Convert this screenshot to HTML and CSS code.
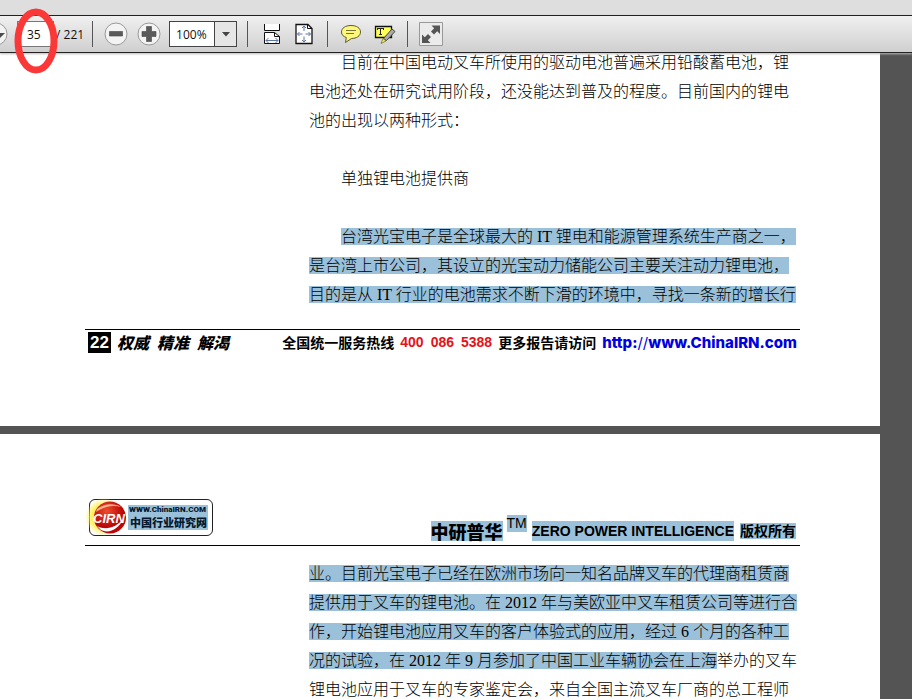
FILE: index.html
```html
<!DOCTYPE html>
<html lang="zh-CN">
<head>
<meta charset="utf-8">
<title>中国锂电池叉车行业报告</title>
<link rel="stylesheet" href="styles.css">
</head>
<body>
<header class="chrome">
  <div class="strip"></div>
  <div class="toolbar">
    <button class="next" aria-label="下一页"><svg width="24" height="24" viewBox="0 0 24 24"><circle cx="12" cy="12" r="11" fill="#f3f3f3" stroke="#999"/><path d="M8 11h13l-6 6z" fill="#4a4a4a"/></svg></button>
    <input class="page-number" aria-label="页码" value="35">
    <span class="total">/ 221</span>
    <span class="divider"></span>
    <button aria-label="缩小"><svg width="24" height="24" viewBox="0 0 24 24"><circle cx="12" cy="12" r="11" fill="#f3f3f3" stroke="#999"/><path d="M5.500 9.500h13v4.500h-13z" fill="#5a5a5a" stroke="#444" stroke-width=".6"/></svg></button>
    <button class="plus" aria-label="放大"><svg width="24" height="24" viewBox="0 0 24 24"><circle cx="12" cy="12" r="11" fill="#f3f3f3" stroke="#999"/><path d="M9.500 4.500h5v5H19v5h-4.500v5h-5v-5H5v-5h4.500z" fill="#5a5a5a" stroke="#444" stroke-width=".6"/></svg></button>
    <span class="zoom">
      <select aria-label="缩放比例"><option>100%</option></select>
      <svg width="8" height="5" viewBox="0 0 8 5"><path d="M0 0h8L4 4.500z" fill="#444"/></svg>
    </span>
    <span class="divider"></span>
    <div class="tools fit">
      <button aria-label="适合宽度"><svg width="18" height="22" viewBox="0 0 18 22"><path d="M1.500 1v6.500h15V1" fill="#fff" stroke="#111"/><path d="M1.500 20.500v-11h10l5 4v7z" fill="#fff" stroke="#111"/><path d="M11.500 9.500v4h5" fill="none" stroke="#111"/><path d="M3 17.500h12M5.500 15L3 17.500 5.500 20M12.500 15l2.500 2.500-2.500 2.500" fill="none" stroke="#5d73a8"/></svg></button>
      <button aria-label="整页显示"><svg width="18" height="22" viewBox="0 0 18 22"><path d="M1 1.500h12l4 4V20.500H1z" fill="#fff" stroke="#111" stroke-width="1.300"/><path d="M12.500 1.500v4H17" fill="none" stroke="#111"/><path d="M2.500 11h5M10.500 11h5M9 3v5M9 13.500v5M4.500 9l-2 2 2 2M13.500 9l2 2-2 2M7 5l2-2 2 2M7 17l2 2 2-2" fill="none" stroke="#5d73a8"/></svg></button>
    </div>
    <span class="divider"></span>
    <div class="tools notes">
      <button aria-label="添加附注"><svg width="22" height="20" viewBox="0 0 22 20"><path d="M11 1.500c5.500 0 9.500 2.500 9.500 6.500s-4 6.500-9 6.500L5.500 18.500l.8-5C3.500 12.500 1.500 11 1.500 8c0-4 4-6.500 9.500-6.500z" fill="#fdf87c" stroke="#5d5b32"/><path d="M6 6.500h10M6 9.500h8" stroke="#77733c"/></svg></button>
      <button aria-label="高亮文本"><svg width="22" height="22" viewBox="0 0 22 22"><path d="M1.500 3.500h16v11h-16z" fill="#ffff55" stroke="#111" stroke-width="1.300"/><path d="M3.500 5.500h6M6.500 5.500v6M5 11.500h3M3.500 5v2M9.500 5v2" stroke="#222"/><path d="M18 6l3 2.500-8.500 9-3-2z" fill="#aaa" stroke="#444"/><path d="M9 15.500l3 2.500-5 2.500z" fill="#f2ee4d" stroke="#65632c" stroke-width=".7"/></svg></button>
    </div>
    <span class="divider"></span>
    <button aria-label="阅读模式"><svg width="24" height="24" viewBox="0 0 24 24"><path d="M.5.5h23v23H.5z" fill="#ebebeb" stroke="#999"/><path d="M12.500 3.500H21V12l-2.800-2.800-3.200 3.200-3-3L15.200 6.200zM3 12.500l2.800 2.800L9 12l3 3-3.200 3.200 2.700 2.800H3z" fill="#555"/></svg></button>
  </div>
  <svg class="marker" width="44" height="66" viewBox="0 0 44 66"><ellipse cx="22" cy="33" rx="18" ry="29" fill="none" stroke="#fb3838" stroke-width="7"/></svg>
</header>
<main class="viewer">
  <section class="page first">
    <div class="copy">
      <p>目前在中国电动叉车所使用的驱动电池普遍采用铅酸蓄电池，锂<br>电池还处在研究试用阶段，还没能达到普及的程度。目前国内的锂电<br>池的出现以两种形式：</p>
      <p>单独锂电池提供商</p>
      <p><mark>台湾光宝电子是全球最大的 IT 锂电和能源管理系统生产商之一，</mark><br><mark>是台湾上市公司，其设立的光宝动力储能公司主要关注动力锂电池，</mark><br><mark>目的是从 IT 行业的电池需求不断下滑的环境中，寻找一条新的增长行</mark></p>
    </div>
    <footer class="page-foot">
      <span class="folio">22</span>
      <span class="motto"><span>权威</span><span>精准</span><span>解渴</span></span>
      <span class="hotline"><span>全国统一服务热线</span><span class="phone"><span>400</span><span>086</span><span>5388</span></span><span>更多报告请访问</span><a href="http://www.ChinaIRN.com">http:<span class="slashes">//</span>www.ChinaIRN.com</a></span>
    </footer>
  </section>
  <section class="page second">
    <header class="page-head">
      <div class="logo">
        <svg width="38" height="35" viewBox="0 0 38 35"><defs><radialGradient id="halo"><stop offset=".6" stop-color="#fff04a"/><stop offset="1" stop-color="#fff04a" stop-opacity="0"/></radialGradient><radialGradient id="ball" cx=".4" cy=".3"><stop offset="0" stop-color="#ee4b2b"/><stop offset="1" stop-color="#ba0707"/></radialGradient></defs><circle cx="14" cy="17" r="19" fill="url(#halo)"/><circle cx="20" cy="17.500" r="16" fill="url(#ball)"/><path d="M7 26c9 5 20 1 26-7-4 10-14 15-22 11z" fill="#fff"/><path d="M7 9C14 3 25 3 31 7 23 5 15 6 6 12z" fill="#f6b08c"/><text x="3" y="23" class="logo-mark">CIRN</text></svg>
        <mark class="logo-text"><span class="logo-url">WWW.ChinaIRN.COM</span><span class="logo-name">中国行业研究网</span></mark>
      </div>
      <div class="brand"><mark class="company">中研普华</mark><mark class="tm">TM</mark><mark class="slogan">ZERO POWER INTELLIGENCE</mark><mark class="rights">版权所有</mark></div>
    </header>
    <div class="copy">
      <p class="flush"><mark>业。目前光宝电子已经在欧洲市场向一知名品牌叉车的代理商租赁商</mark><br><mark>提供用于叉车的锂电池。在 2012 年与美欧亚中叉车租赁公司等进行合</mark><br><mark>作，开始锂电池应用叉车的客户体验式的应用，经过 6 个月的各种工</mark><br><mark>况的试验，在 2012 年 9 月参加了中国工业车辆协会在上海</mark>举办的叉车<br>锂电池应用于叉车的专家鉴定会，来自全国主流叉车厂商的总工程师</p>
    </div>
  </section>
</main>
</body>
</html>
```
FILE: styles.css
```css
* { box-sizing: border-box; }
body { margin: 0; height: 100vh; overflow: hidden; display: flex; flex-direction: column; background: #545454; color: #000; font-family: "Liberation Sans", "Noto Sans CJK SC", sans-serif; }
.chrome { position: relative; z-index: 1; flex: none; }
.strip { height: 15px; background: #dedede; }
.toolbar { display: flex; align-items: center; height: 38px; border-top: 1px solid #222; border-bottom: 1px solid #222; background: linear-gradient(#f0f0f0, #cfcfcf); font: 12px "Open Sans", sans-serif; color: #111; box-shadow: 0 1px 2px #bbb; }
button { flex: none; padding: 0; border: 0; background: none; }
button svg { display: block; }
.next { margin-left: -16px; }
.page-number { width: 37px; height: 26px; margin-left: 9px; padding: 0 0 0 9px; border: 1px solid #777; background: #fff; font: inherit; color: inherit; }
.total { margin-left: 2px; white-space: nowrap; }
.divider { flex: none; width: 1px; height: 26px; margin: 0 11px 0 10px; background: #555; }
.total + .divider { margin-left: 8px; }
.plus { margin-left: 9px; }
.zoom { display: flex; align-items: center; width: 68px; height: 26px; margin-left: 8px; padding-right: 6px; border: 1px solid #444; background: linear-gradient(90deg, #fff 44px, #444 44px, #444 45px, #e6e6e6 45px); }
.zoom select { appearance: none; flex: 1; min-width: 0; height: 24px; padding: 0 0 0 6px; border: 0; font: inherit; color: inherit; background: none; }
.zoom svg { flex: none; pointer-events: none; }
.tools { display: flex; align-items: center; }
.fit { gap: 14px; padding: 0 4px; }
.notes { gap: 12px; padding: 0 1px; }
.marker { position: absolute; left: 14px; top: 8px; }
.viewer { flex: 1; min-height: 0; display: flex; flex-direction: column; gap: 8px; padding-right: 32px; }
.page { flex: none; background: #fff; padding: 0 80px 0 85px; }
.first { margin-top: -5px; padding-bottom: 72px; }
.second { flex: 1; min-height: 0; padding-top: 65px; }
.copy { padding-left: 224px; font: 300 16px/29px "Liberation Serif", "Noto Sans CJK SC", serif; white-space: nowrap; }
.copy p { margin: 0 0 29px; text-indent: 32px; }
.copy p:last-child { margin-bottom: 20px; }
.copy .flush { text-indent: 0; }
mark { background: #9ac0da; color: inherit; }
.page-foot { display: flex; align-items: center; height: 25px; border-top: 1px solid #000; font-weight: 700; font-size: 14px; white-space: nowrap; }
.folio { padding: 0 2px; margin-left: 3px; background: #000; color: #fff; font-size: 17px; line-height: 21px; }
.motto { display: flex; gap: 8px; margin-left: 6px; font-size: 16px; font-weight: 900; font-style: italic; }
.hotline { display: flex; align-items: center; gap: 6px; margin-left: auto; padding-right: 3px; }
.phone { display: flex; gap: 7px; color: #e51218; }
.hotline a { color: #0000e0; font: 800 15px "Inter", sans-serif; text-decoration: none; }
.slashes { font-weight: 400; }
.page-head { display: flex; align-items: flex-start; justify-content: space-between; height: 47px; margin-bottom: 13px; border-bottom: 1px solid #000; }
.logo { display: flex; align-items: center; width: 124px; height: 37px; margin-left: 4px; border: 1px solid #222; border-radius: 6px; }
.logo svg { flex: none; overflow: visible; }
.logo-mark { font: italic 900 13px "Liberation Sans", sans-serif; fill: #fff; }
.logo-text { display: flex; flex-direction: column; white-space: nowrap; color: #06182c; }
.logo-url { padding-left: 1px; font: 900 8px/9px "Roboto", sans-serif; }
.logo-name { padding: 0 1px 0 2px; font: 900 11px/16px "Noto Sans CJK SC", sans-serif; }
.brand { display: flex; align-items: flex-end; height: 42px; padding-right: 4px; white-space: nowrap; }
.company { font: 900 18px/20px "Noto Sans CJK SC", sans-serif; }
.tm { align-self: flex-start; margin: 16px 5px 0 4px; font-size: 14px; line-height: 17px; }
.slogan { font-weight: 700; font-size: 14px; line-height: 20px; }
.rights { margin: 0 0 2px 6px; font-weight: 700; font-size: 14px; line-height: 16px; }
```
